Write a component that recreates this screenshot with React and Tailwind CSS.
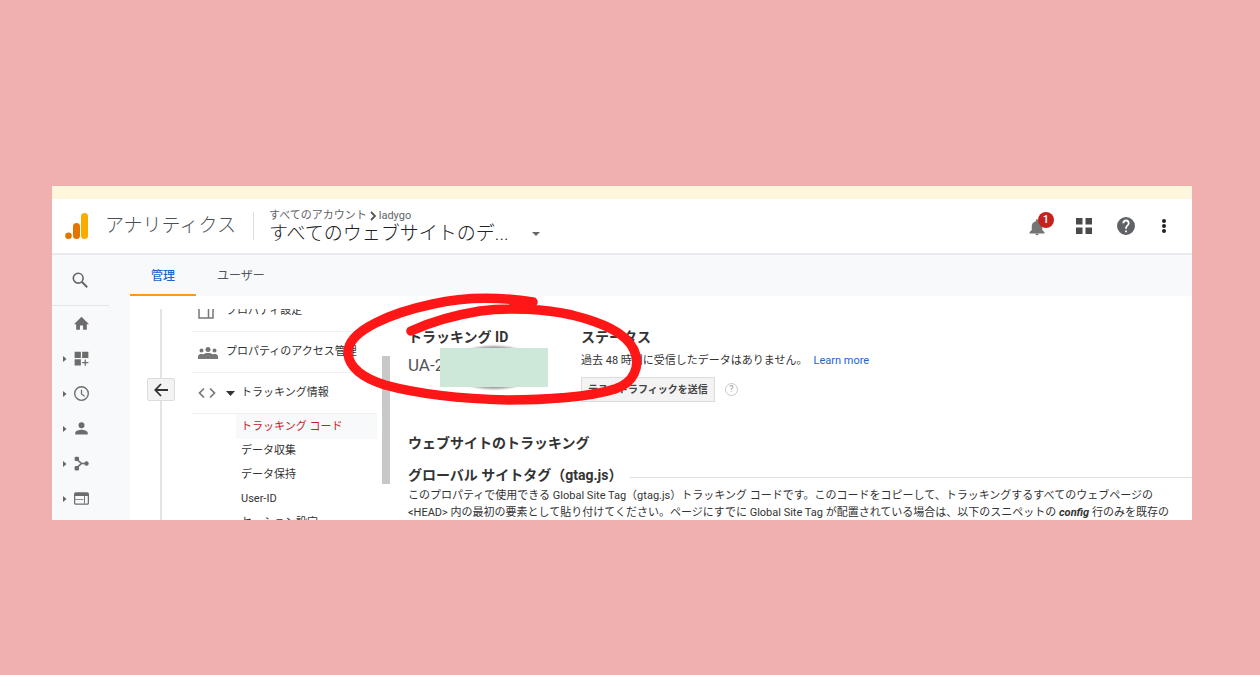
import { clsx } from 'clsx';

const navItems = [
  {
    label: 'ホーム',
    icon: <path d="M9.500 22v-7h5v7h6v-9H24L12 1 0 13h3.500v9z" />,
  },
  {
    label: 'カスタム',
    expandable: true,
    icon: <path d="M1 1h10v10H1zM13 1h10v10H13zM1 13h10v10H1zM17 13.500h2v4h4v2h-4v4h-2v-4h-4v-2h4z" />,
  },
  {
    label: 'リアルタイム',
    expandable: true,
    icon: (
      <path
        fillRule="evenodd"
        d="M12 0a12 12 0 1 0 0 24 12 12 0 0 0 0-24zm0 2.200a9.800 9.800 0 1 1 0 19.600 9.800 9.800 0 0 1 0-19.600zM11 6v7l5.500 4 1-1.500-4.500-3.200V6z"
      />
    ),
  },
  {
    label: 'ユーザー',
    expandable: true,
    icon: <path d="M12 11.500a4.800 4.800 0 1 0 0-9.600 4.800 4.800 0 0 0 0 9.600zM2 21.500v-2.500c0-3.500 6.500-5 10-5s10 1.500 10 5v2.500z" />,
  },
  {
    label: '集客',
    expandable: true,
    icon: (
      <>
        <path d="M4 5l8 7-8 7M12 12h8" fill="none" stroke="currentColor" strokeWidth="2.500" />
        <rect x="1" y="1" width="7" height="7" rx="2" />
        <rect x="1" y="16" width="7" height="7" rx="2" />
        <circle cx="20" cy="12" r="3.500" />
      </>
    ),
  },
  {
    label: '行動',
    expandable: true,
    icon: (
      <>
        <path d="M3 2h18a3 3 0 0 1 3 3v14a3 3 0 0 1-3 3H3a3 3 0 0 1-3-3V5a3 3 0 0 1 3-3zm-1 6v11a1 1 0 0 0 1 1h18a1 1 0 0 0 1-1V8z" fillRule="evenodd" />
        <path d="M2 13h13v1.500H2zM16 8h1.500v12H16z" />
      </>
    ),
  },
];

const subItems = ['トラッキング コード', 'データ収集', 'データ保持', 'User-ID', 'セッション設定'];

const Header = () => (
  <header className="flex items-center h-[56px] shrink-0 bg-white border-b-2 border-[#e8eaed] pl-[13px]">
    <svg viewBox="0 0 24 27" className="w-6 h-[27px] shrink-0" aria-hidden="true">
      <rect x="16" y="0" width="7" height="26" rx="3.500" fill="#fbab00" />
      <rect x="8" y="10" width="7" height="16" rx="3.500" fill="#e37400" />
      <circle cx="3.500" cy="22.700" r="3.300" fill="#e37400" />
    </svg>
    <span className="ml-4 text-[19px] leading-6 font-light text-[#4c5054] whitespace-nowrap">アナリティクス</span>
    <span className="ml-[17px] w-px h-7 bg-[#dadce0]" />
    <div className="ml-[15px] whitespace-nowrap">
      <div className="flex items-center text-[11px] leading-4 text-[#5f6368]">
        <span>すべてのアカウント</span>
        <svg viewBox="0 0 8 10" className="w-2 h-[10px] mx-0.5" aria-hidden="true">
          <path d="M2 1l4 4-4 4" fill="none" stroke="#555" strokeWidth="1.800" />
        </svg>
        <span>ladygo</span>
      </div>
      <button type="button" className="flex items-center text-[19px] leading-5 font-light text-[#202124]">
        すべてのウェブサイトのデ...
        <svg viewBox="0 0 8 4" className="w-2 h-1 ml-6" aria-hidden="true">
          <path d="M0 0h8L4 4z" fill="#666" />
        </svg>
      </button>
    </div>
    <div className="ml-auto flex items-center pr-[25px]">
      <button type="button" aria-label="通知" className="relative mr-[30px] w-[18px] h-6">
        <svg viewBox="0 0 24 24" className="w-[18px] h-[18px] mt-0.5" fill="#757575">
          <path d="M12 23a2 2 0 0 0 2-2h-4a2 2 0 0 0 2 2zm7-7v-5c0-3.500-2-6-5.500-6.800V3a1.500 1.500 0 0 0-3 0v1.200C7 5 5 7.500 5 11v5l-3 3v1.500h20V19z" />
        </svg>
        <span className="absolute -top-0.5 left-[10px] w-4 h-4 rounded-full bg-[#c5221f] text-white text-[11px] leading-4 font-medium text-center">
          1
        </span>
      </button>
      <button type="button" aria-label="アプリ" className="mr-[25px]">
        <svg viewBox="0 0 16 16" className="w-4 h-4" fill="#4a4a4a">
          <path d="M0 0h6.500v6.500H0zM9.500 0H16v6.500H9.500zM0 9.500h6.500V16H0zM9.500 9.500H16V16H9.500z" />
        </svg>
      </button>
      <button type="button" aria-label="ヘルプ" className="mr-[26px]">
        <svg viewBox="2 2 20 20" className="w-[18px] h-[18px]" fill="#5f6368">
          <path d="M12 2a10 10 0 1 0 0 20 10 10 0 0 0 0-20zm1 17h-2v-2h2zm2.070-7.750-.9.920C13.450 12.900 13 13.500 13 15h-2v-.5c0-1.100.450-2.100 1.170-2.830l1.240-1.260A2 2 0 1 0 10 9H8a4 4 0 1 1 7.070 2.250z" />
        </svg>
      </button>
      <button type="button" aria-label="その他">
        <svg viewBox="0 0 6 16" className="w-[6px] h-4" fill="#222">
          <circle cx="3" cy="3" r="2" />
          <circle cx="3" cy="8" r="2" />
          <circle cx="3" cy="13" r="2" />
        </svg>
      </button>
    </div>
  </header>
);

const Sidebar = () => (
  <nav className="w-[78px] shrink-0">
    <div className="w-[57px] h-[51px] flex items-center justify-end border-b border-[#e3e5e8] pr-[21px]">
      <button type="button" aria-label="検索">
        <svg viewBox="0 0 16 16" className="w-4 h-4" fill="none" stroke="#666">
          <circle cx="6.200" cy="6.200" r="4.900" strokeWidth="1.600" />
          <path d="M9.800 9.800l5.400 5.400" strokeWidth="2" />
        </svg>
      </button>
    </div>
    {navItems.map(item => (
      <button key={item.label} type="button" aria-label={item.label} className="flex items-center w-full h-[35px] pl-2.5">
        <svg viewBox="0 0 5 6" className="w-[5px] h-[6px]" fill="#666">
          {item.expandable && <path d="M1 0l3.500 3L1 6z" />}
        </svg>
        <svg viewBox="0 0 24 24" className="w-[15px] h-[15px] ml-[7px] text-[#6c6c6c]" fill="currentColor">
          {item.icon}
        </svg>
      </button>
    ))}
  </nav>
);

const PropertyMenu = () => (
  <div className="flex w-[198px] shrink-0 mt-[13px] overflow-hidden text-[11px] text-[#333]">
    <div className="w-[185px] overflow-hidden whitespace-nowrap">
      <a href="#settings" className="flex items-center h-[41px] -mt-[18px] border-b border-[#f0f0f0]">
        <svg viewBox="0 0 16 16" className="w-4 h-4 ml-1.5 mr-3" fill="none" stroke="#777" strokeWidth="1.500">
          <path d="M1 1h14v14H1zM10.500 1v14" />
        </svg>
        プロパティ設定
      </a>
      <a href="#access" className="flex items-center h-[41px] border-b border-[#f0f0f0]">
        <svg viewBox="0 0 20 12" className="w-5 h-3 ml-1.5 mr-2 mt-0.5" fill="#777">
          <circle cx="3.500" cy="3.500" r="2" />
          <circle cx="10" cy="2.600" r="2.500" />
          <circle cx="16.500" cy="3.500" r="2" />
          <path d="M0 12V9.500C0 7.500 2 7 4 7l1.500.3C6.500 6.500 8 6 10 6s3.500.5 4.500 1.300L16 7c2 0 4 .5 4 2.500V12z" />
        </svg>
        プロパティのアクセス管理
      </a>
      <a href="#tracking" className="flex items-center h-[41px] border-b border-[#f0f0f0]">
        <svg viewBox="0 0 18 12" className="w-[18px] h-3 ml-1.5 mr-2.5" fill="none" stroke="#777" strokeWidth="1.700">
          <path d="M6 1.500L1.500 6 6 10.500M12 1.500L16.500 6 12 10.500" />
        </svg>
        <svg viewBox="0 0 9 5" className="w-[9px] h-[5px] mr-1.5" fill="#333">
          <path d="M0 0h9L4.500 5z" />
        </svg>
        トラッキング情報
      </a>
      <ul className="ml-[44px]">
        {subItems.map((item, i) => (
          <li key={item}>
            <a
              href="#sub"
              className={clsx('block pl-[5px]', i === 0 ? 'leading-[25px] bg-[#f8f9fb] text-[#c5221f]' : 'leading-6')}
            >
              {item}
            </a>
          </li>
        ))}
      </ul>
    </div>
    {/* Scrollbar */}
    <div className="ml-[5px] mt-[47px] w-2 h-32 bg-[#c8c8c8]" />
  </div>
);

const TrackingInfo = () => (
  <section className="flex-1 min-w-0 overflow-hidden whitespace-nowrap pl-[18px] pt-[31px] text-[11px] text-[#333]">
    <div className="flex">
      <div className="w-[173px] shrink-0">
        <h2 className="text-[14px] leading-5 font-bold">トラッキング ID</h2>
        <p className="mt-2 text-[17px] leading-5 text-[#555]">UA-2</p>
      </div>
      <div>
        <h2 className="text-[14px] leading-5 font-bold">ステータス</h2>
        <p className="mt-1 leading-5">
          過去 48 時間に受信したデータはありません。
          <a href="#learn" className="ml-1.5 text-[#1967d2]">Learn more</a>
        </p>
        <div className="flex items-center mt-1.5">
          <button
            type="button"
            className="h-[25px] px-1.5 border border-[#dcdcdc] bg-[#f3f3f3] text-[10px] font-bold text-[#444]"
          >
            テストトラフィックを送信
          </button>
          <button
            type="button"
            aria-label="ヘルプ"
            className="ml-2.5 w-[13px] h-[13px] rounded-full border border-[#c8c8c8] text-[9px] leading-[11px] text-[#999]"
          >
            ?
          </button>
        </div>
      </div>
    </div>
    <h2 className="mt-[31px] text-[14px] leading-5 font-bold">ウェブサイトのトラッキング</h2>
    <div className="flex items-center mt-3">
      <h3 className="text-[14px] leading-5 font-bold">グローバル サイトタグ（gtag.js）</h3>
      <span className="flex-1 ml-2 mt-1 h-px bg-[#e0e0e0]" />
    </div>
    <p className="mt-0.5 leading-[17px]">
      このプロパティで使用できる Global Site Tag（gtag.js）トラッキング コードです。このコードをコピーして、トラッキングするすべてのウェブページの
      <br />
      &lt;HEAD&gt; 内の最初の要素として貼り付けてください。ページにすでに Global Site Tag が配置されている場合は、以下のスニペットの{' '}
      <b className="italic">config</b> 行のみを既存の
    </p>
  </section>
);

const Annotation = () => (
  <>
    <svg viewBox="430 338 128 60" className="absolute left-[378px] top-[152px] w-32 h-[60px] pointer-events-none" aria-hidden="true">
      <defs>
        <filter id="patch-shadow" x="-20%" y="-20%" width="140%" height="140%">
          <feGaussianBlur stdDeviation="1" />
        </filter>
      </defs>
      <ellipse cx="494" cy="367.500" rx="46" ry="21.500" fill="#000" opacity="0.4" filter="url(#patch-shadow)" />
      <rect x="440" y="348" width="108" height="39" fill="#cde8d8" />
    </svg>
    <svg viewBox="340 290 304 120" className="absolute left-[288px] top-[104px] w-[304px] h-[120px] pointer-events-none" aria-hidden="true">
      <path
        d="M533 302C500 297 463 297 433 304C395 312 346 330 348 354C350 370 366 379 385 385C422 395 465 399 508 400C545 400 590 397 615 389C634 383 641 366 634 350C626 332 600 322 572 315C545 309 510 307 480 311C455 315 433 321 411 331"
        fill="none"
        stroke="#ff1616"
        strokeWidth="9.500"
        strokeLinecap="round"
      />
    </svg>
  </>
);

export default function App() {
  return (
    <div className="flex flex-col h-screen bg-[#f0b0b0] pl-[52px] pr-[68px] pt-[186px] pb-[155px] font-[Roboto,'Noto_Sans_CJK_JP',sans-serif]">
      <main className="relative flex flex-col flex-1 min-h-0 overflow-hidden bg-[#f8f9fb]">
        <div className="h-[13px] shrink-0 bg-[#fef6dd]" />
        <Header />
        <div className="flex flex-1 min-h-0">
          <Sidebar />
          <div className="flex flex-col flex-1 min-w-0">
            <div className="flex h-[41px] shrink-0 text-[12px] text-[#555]">
              <button type="button" className="w-[66px] border-b-2 border-[#f99d0b] pt-0.5 text-[#1967d2] font-medium">
                管理
              </button>
              <button type="button" className="px-[21px]">ユーザー</button>
            </div>
            <div className="flex flex-1 min-h-0 bg-white">
              <div className="flex flex-col items-center w-[62px] shrink-0 pt-[13px]">
                <span className="w-0.5 h-[69px] shrink-0 bg-[#e4e4e4]" />
                <button
                  type="button"
                  aria-label="戻る"
                  className="flex items-center justify-center w-7 h-[23px] shrink-0 rounded-xs border border-[#dcdcdc] bg-[#f3f3f3]"
                >
                  <svg viewBox="0 0 14 14" className="w-3.5 h-3.5" fill="none" stroke="#333" strokeWidth="1.800">
                    <path d="M14 7H1.500M7 1L1.300 7 7 13" />
                  </svg>
                </button>
                <span className="w-0.5 flex-1 bg-[#e4e4e4]" />
              </div>
              <PropertyMenu />
              <TrackingInfo />
            </div>
          </div>
        </div>
        <Annotation />
      </main>
    </div>
  );
}
